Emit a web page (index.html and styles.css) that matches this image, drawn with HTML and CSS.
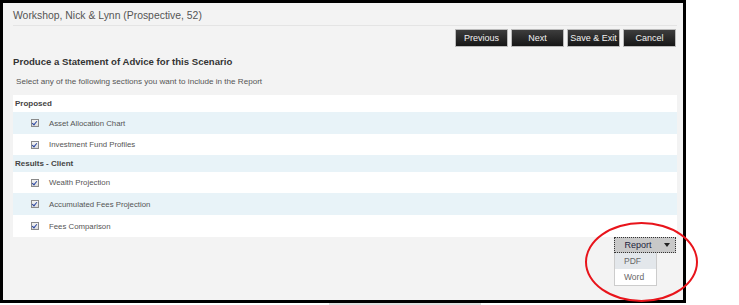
FILE: index.html
```html
<!DOCTYPE html>
<html lang="en">
<head>
    <meta charset="UTF-8">
    <title>Produce a Statement of Advice</title>
    <link rel="stylesheet" href="styles.css">
</head>
<body>
    <div class="page">
        <div class="frame">
            <div class="title">Workshop, Nick &amp; Lynn (Prospective, 52)</div>
            <div class="toolbar">
                <button class="btn">Previous</button>
                <button class="btn">Next</button>
                <button class="btn">Save &amp; Exit</button>
                <button class="btn">Cancel</button>
            </div>
            <h2 class="heading">Produce a Statement of Advice for this Scenario</h2>
            <p class="hint">Select any of the following sections you want to include in the Report</p>

            <div class="sections">
                <div class="group">Proposed</div>
                <div class="row alt"><span class="check"></span>Asset Allocation Chart</div>
                <div class="row"><span class="check"></span>Investment Fund Profiles</div>
                <div class="group alt">Results - Client</div>
                <div class="row"><span class="check"></span>Wealth Projection</div>
                <div class="row alt"><span class="check"></span>Accumulated Fees Projection</div>
                <div class="row last"><span class="check"></span>Fees Comparison</div>
            </div>

            <div class="report">
                <button class="report-btn">Report <span class="arrow"></span></button>
                <ul class="menu">
                    <li class="hover">PDF</li>
                    <li>Word</li>
                </ul>
            </div>
        </div>
        <div class="scroll"></div>
        <div class="circle"></div>
    </div>
</body>
</html>
```

FILE: styles.css
```css
body {
    margin: 0;
    background: #fff;
    font-family: "Liberation Sans", Arial, sans-serif;
}
.page {
    position: relative;
    width: 739px;
    height: 305px;
}
.frame {
    width: 664px;
    height: 297px;
    border: 3px solid #000;
    background: #f3f3f3;
    padding: 0 6px 0 10px;
    display: flex;
    flex-direction: column;
}
.title {
    padding-top: 4px;
    height: 18px;
    line-height: 18px;
    font-size: 10.4px;
    color: #555;
    border-bottom: 1px solid #e4e4e4;
}
.toolbar {
    display: flex;
    justify-content: flex-end;
    gap: 3px;
    margin-top: 3px;
    padding-right: 1px;
}
.btn {
    width: 53px;
    height: 18px;
    padding: 0;
    border: 1px solid #bbb;
    background: linear-gradient(#3d3d3d, #161616);
    color: #f2f2f2;
    font-family: "Liberation Sans", Arial, sans-serif;
    font-size: 9px;
}
.heading {
    margin: 8px 0 0;
    line-height: 14px;
    font-size: 9.6px;
    font-weight: bold;
    color: #333;
}
.hint {
    margin: 7px 0 0 3px;
    line-height: 12px;
    font-size: 8.1px;
    color: #555;
}
.sections {
    margin-top: 7px;
    background: #fff;
}
.group {
    height: 17px;
    line-height: 17px;
    padding-left: 2px;
    font-size: 8px;
    font-weight: bold;
    color: #444;
}
.row {
    height: 21px;
    display: flex;
    align-items: center;
    padding-left: 18px;
    font-size: 7.8px;
    color: #555;
}
.row.alt,
.row:nth-child(2) {
    height: 22px;
}
.row.last {
    height: 22px;
}
.alt {
    background: #e8f3f8;
}
.check {
    width: 6px;
    height: 6px;
    margin-right: 10px;
    border: 1px solid #8a8a8a;
    background: linear-gradient(#f4f4f4, #dcdcdc);
    position: relative;
}
.check::after {
    content: "";
    position: absolute;
    left: 1px;
    top: 0;
    width: 2px;
    height: 4px;
    border: solid #2b47a0;
    border-width: 0 1.5px 1.5px 0;
    transform: rotate(40deg);
}
.report {
    position: relative;
    display: flex;
    justify-content: flex-end;
    padding-right: 1px;
}
.report-btn {
    width: 62px;
    height: 16px;
    padding: 0 0 0 4px;
    border: 1px dotted #333;
    background: #c8c8c8;
    color: #1c1c3c;
    font-family: "Liberation Sans", Arial, sans-serif;
    font-size: 9px;
    display: flex;
    align-items: center;
    justify-content: center;
    gap: 12px;
}
.arrow {
    width: 0;
    height: 0;
    border-left: 3px solid transparent;
    border-right: 3px solid transparent;
    border-top: 4px solid #222;
}
.menu {
    position: absolute;
    top: 16px;
    right: 20px;
    width: 41px;
    margin: 0;
    padding: 0;
    list-style: none;
    border: 1px solid #ccc;
    border-top: none;
    background: #fff;
}
.menu li {
    height: 16px;
    line-height: 16px;
    padding-left: 9px;
    font-size: 8.5px;
    color: #666;
}
.menu li.hover {
    background: #e3e7eb;
}
.scroll {
    margin-left: 329px;
    width: 152px;
    height: 2px;
    background: #dedede;
}
.circle {
    position: absolute;
    left: 585px;
    top: 222px;
    width: 109px;
    height: 76px;
    border: 2px solid #e8141b;
    border-radius: 50%;
}
```
